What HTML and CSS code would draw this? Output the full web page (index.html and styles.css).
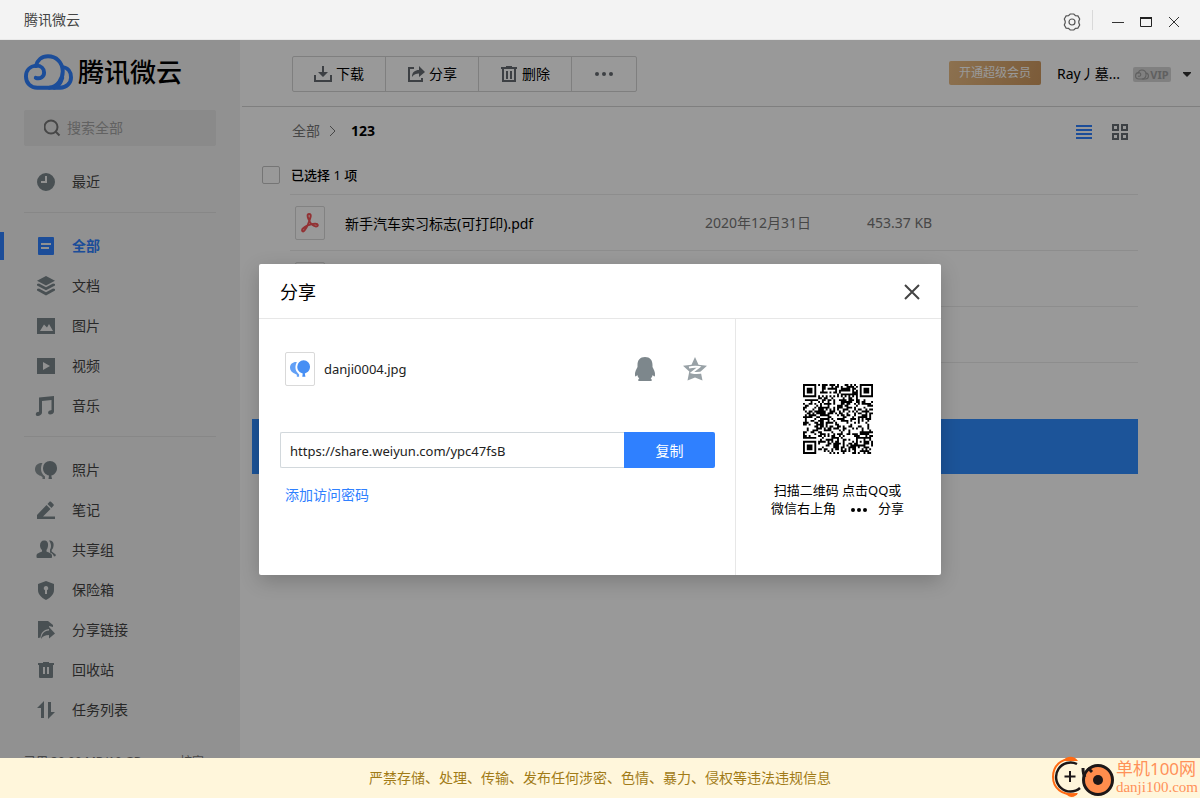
FILE: index.html
```html
<!DOCTYPE html>
<html lang="zh-CN">
<head>
<meta charset="utf-8">
<title>腾讯微云</title>
<link rel="stylesheet" href="styles.css">
</head>
<body>
<svg class="defs" aria-hidden="true">
  <symbol id="cloud" viewBox="0 0 50 36"><g fill="none" stroke="currentColor" stroke-width="4" stroke-linecap="round" stroke-linejoin="round"><path d="M12 24c4.500 1.500 8.500-1 8.500-5.500c0-4-3-7-8-7C6 12 2 16.500 2 22.500C2 29.500 7 34 13.500 34H37c6 0 11-4.500 11-10.500c0-6-3.500-10-8.500-10.500"/><path d="M12 12C13.500 6 18 2 24.500 2C33 2 39 8 39.500 16.500C40 25 34 33 26 34M39 24C37.500 29 34 33 31 34"/></g></symbol>
  <symbol id="balloons" viewBox="0 0 22 18"><path d="M7.500 2C3.500 1.500 0 4 0 8.200c0 3.300 2.500 5.700 5.500 6.500L7.500 16v2H10v-2.500C7 13 6 10.500 6 8c0-2.500.5-4.200 1.500-6z" opacity=".85"/><path d="M15 0a7 7 0 0 1 7 7.200c0 4-2.700 6.500-5.700 7.300L17 18h-3.500l.5-3.500C10.500 13.700 8 11 8 7.200A7 7 0 0 1 15 0z"/></symbol>
</svg>
<div class="app">
  <header class="titlebar">
    <span>腾讯微云</span>
    <div class="window-tools">
      <button aria-label="设置"><svg width="18" height="18" viewBox="0 0 18 18" fill="none" stroke="#555" stroke-width="1.200"><path d="M7.200 1h3.600l1.700 1.700 2.400.2 1.800 3.100-.9 2.200v1.600l.9 2.200-1.800 3.100-2.400.2-1.700 1.700H7.200l-1.700-1.700-2.400-.2L1.300 12l.9-2.200V8.200L1.300 6l1.800-3.100 2.400-.2z"/><circle cx="9" cy="9" r="3"/></svg></button>
      <i class="tool-rule"></i>
      <button aria-label="最小化"><svg width="12" height="12"><path d="M0 6.500h12" stroke="#333"/></svg></button>
      <button aria-label="最大化"><svg width="12" height="12"><path d="M.5 1v9.500h11V1M0 1.500h12" fill="none" stroke="#222"/><path d="M0 2h12" stroke="#222" stroke-width="2"/></svg></button>
      <button aria-label="关闭窗口"><svg width="12" height="12"><path d="M1 1l10 10M11 1L1 11" stroke="#333"/></svg></button>
    </div>
  </header>

  <div class="workspace">
    <aside class="sidebar">
      <div class="brand"><svg width="49" height="36"><use href="#cloud"/></svg><span>腾讯微云</span></div>
      <label class="search"><svg width="18" height="18" viewBox="0 0 18 18" fill="none" stroke="#777" stroke-width="2"><circle cx="7" cy="8" r="6.500"/><path d="M11.500 12.500l4 4"/></svg><input type="text" placeholder="搜索全部" aria-label="搜索全部"></label>
      <nav>
        <div class="nav-group">
          <a href="#"><svg viewBox="0 0 22 22"><path fill-rule="evenodd" d="M11 2a9 9 0 1 1 0 18 9 9 0 0 1 0-18zM10 5v5H6v2h6V5z"/></svg>最近</a>
        </div>
        <div class="nav-group">
          <a href="#" class="active"><svg viewBox="0 0 22 22"><path fill-rule="evenodd" d="M4 2h14a1 1 0 0 1 1 1v16a1 1 0 0 1-1 1H4a1 1 0 0 1-1-1V3a1 1 0 0 1 1-1zm2 6v2h10V8zm0 4v2h8v-2z"/></svg>全部</a>
          <a href="#"><svg viewBox="0 0 22 22"><path d="M11 1l9 4.700-9 4.800-9-4.800zM2 9l2-.5 7 3.700 7-3.700 2 .5v1.500l-9 4.800-9-4.800zM2 14l2-.5 7 3.700 7-3.700 2 .5v1.500L11 20.500 2 15.500z"/></svg>文档</a>
          <a href="#"><svg viewBox="0 0 22 22"><path fill-rule="evenodd" d="M2 3h18v16H2zm3 13h13l-4-7-2 3.500L9 9.500z"/></svg>图片</a>
          <a href="#"><svg viewBox="0 0 22 22"><path fill-rule="evenodd" d="M2 3h18v16H2zm6 4v8l7-4z"/></svg>视频</a>
          <a href="#"><svg viewBox="0 0 22 22"><path d="M4 2.500L19 1v15.500c0 2-2 3-4 3-2.500 0-2.500-3.500 0-4l1.500-.5V5L7 6v11.500c0 2-2.500 3.500-4.500 3.500-2.500 0-2-3.500 0-4l1.500-.3z"/></svg>音乐</a>
        </div>
        <div class="nav-group">
          <a href="#"><svg viewBox="0 0 22 22"><use href="#balloons" y="2" width="22" height="18"/></svg>照片</a>
          <a href="#"><svg viewBox="0 0 22 22"><path d="M2 19v-3L11.500 6l4 4L8 17.500h12v2.500H2zM12.500 5l2-2.200c.5-.5 1-.4 1.500 0l2.500 2.400c.4.500.4 1 0 1.500L16.500 9z"/></svg>笔记</a>
          <a href="#"><svg viewBox="0 0 22 22"><path d="M9 1.500c3 0 4.500 2 4 5.500-.2 2-1 3-1.500 4v1.500c2.500 1 5.500 2 5.500 4V18c0 .6-.4 1-1 1H3c-1 0-1.500-.4-1.500-1v-1.500c0-2 3-3 5.500-4V11C6 10 5 8.500 5 6.500c0-3 1.500-5 4-5zM14 1.500c3.500 0 5 2 4.500 5.500-.2 2-1 3-1.800 4v1.500l4 3v1.500l-1.700.5c-.5-1.500-1.500-3-4-4V10.500c1.500-2 1.500-6-1-9z"/></svg>共享组</a>
          <a href="#"><svg viewBox="0 0 22 22"><path fill-rule="evenodd" d="M11 2l8 3v6c0 4-3 7.500-8 10-5-2.500-8-6-8-10V5zm0 5a2.200 2.200 0 0 0-1 4.200V15h2v-3.800A2.200 2.200 0 0 0 11 7z"/></svg>保险箱</a>
          <a href="#"><svg viewBox="0 0 22 22"><path d="M3 2h10l5 4v2l-4-1v3C8 11 6 14 5.500 18.500L3 19z"/><path d="M6 20c.5-5 3-8 8-8.500V8l6 6.500-6 5V16c-4 0-6 1-8 4z"/></svg>分享链接</a>
          <a href="#"><svg viewBox="0 0 22 22"><path fill-rule="evenodd" d="M3 4h5V3h6v1h5v2h-1v12a1 1 0 0 1-1 1H5a1 1 0 0 1-1-1V6H3zm5 4v7h2V8zm4 0v7h2V8z"/></svg>回收站</a>
          <a href="#"><svg viewBox="0 0 22 22"><path d="M9 2v17H6V9H2zM13 3h3v10h4l-7 7z"/></svg>任务列表</a>
        </div>
      </nav>
      <div class="quota"><span>已用 30.00 MB/10 GB</span><a href="#">扩容<svg width="8" height="8"><path d="M1 4l3-3 3 3M4 1v7" fill="none" stroke="#777"/></svg></a></div>
    </aside>

    <main class="main">
      <header class="topbar">
        <div class="actions">
          <button><svg width="18" height="18" viewBox="0 0 18 18"><path d="M1 10v6h16v-6" fill="none" stroke="#666c72" stroke-width="2"/><path d="M8 1h2v6h4l-5 5-5-5h4z"/></svg>下载</button>
          <button><svg width="18" height="18" viewBox="0 0 18 18"><path d="M7 3H2v13h13v-3" fill="none" stroke="#666c72" stroke-width="2"/><path d="M5 12c0-5 3-7 7-7V1l6 6-6 5V8.500C9 8.500 7 9 5 12z"/></svg>分享</button>
          <button><svg width="18" height="18" viewBox="0 0 18 18"><path d="M3 4v12h12V4" fill="none" stroke="#666c72" stroke-width="2"/><path d="M1 2h5V1h6v1h5v2H1zM6 6h2v8H6zM10 6h2v8h-2z"/></svg>删除</button>
          <button class="more" aria-label="更多"><svg width="18" height="6"><circle cx="2" cy="3" r="2"/><circle cx="9" cy="3" r="2"/><circle cx="16" cy="3" r="2"/></svg></button>
        </div>
        <div class="account">
          <button class="upgrade">开通超级会员</button>
          <span class="user">Ray丿墓...</span>
          <span class="vip"><svg width="14" height="11"><use href="#cloud"/></svg>VIP</span>
          <svg class="caret" width="10" height="6"><path d="M1 0h8v1L5 5 1 1z"/></svg>
        </div>
      </header>

      <section class="files">
        <div class="path">
          <div><a href="#">全部</a><svg width="8" height="12"><path d="M1 1l5 5-5 5" fill="none" stroke="#777"/></svg><b>123</b></div>
          <div class="views">
            <button aria-label="列表"><svg width="16" height="14" fill="#2f80ff"><path d="M0 0h16v2H0zM0 4h16v2H0zM0 8h16v2H0zM0 12h16v2H0z"/></svg></button>
            <button aria-label="网格"><svg width="16" height="16" fill="none" stroke="#676d73" stroke-width="2"><path d="M1 1h5v5H1zM10 1h5v5h-5zM1 10h5v5H1zM10 10h5v5h-5z"/></svg></button>
          </div>
        </div>
        <label class="selection"><input type="checkbox"><span>已选择 <em>1</em> 项</span></label>
        <table>
          <tr><td class="mark"></td><td class="thumb"><span><svg width="18" height="20" viewBox="0 0 18 20" fill="none" stroke="#f45458" stroke-width="2"><path d="M8 1c-2 0-1.500 3-.5 5 1.500 4 4 7 7.500 7.500 2.500 0 2.500-3-1-2.800-5 .3-10 2.300-12.500 5.300-1 2 .5 3.500 2 1.500C6.500 13.500 8.500 8 9.500 4 10 2 9.500 1 8 1z"/></svg></span></td><td class="name">新手汽车实习标志(可打印).pdf</td><td class="date">2020年12月31日</td><td class="size">453.37 KB</td></tr>
          <tr><td class="mark"></td><td class="thumb"><span></span></td><td colspan="3"></td></tr>
          <tr><td class="mark"></td><td class="thumb"><span></span></td><td colspan="3"></td></tr>
          <tr class="last"><td class="mark"></td><td class="thumb"><span></span></td><td colspan="3"></td></tr>
          <tr class="selected"><td class="mark"></td><td class="thumb"><span></span></td><td colspan="3"></td></tr>
        </table>
      </section>
    </main>
  </div>

  <div class="mask">
    <section class="dialog" role="dialog" aria-labelledby="share-title">
      <header><h2 id="share-title">分享</h2><button aria-label="关闭"><svg width="16" height="16"><path d="M1 1l14 14M15 1L1 15" stroke="#444" stroke-width="2"/></svg></button></header>
      <div class="dialog-body">
        <div class="share">
          <div class="share-file">
            <span class="file-icon"><svg width="20" height="17" fill="#478ff4"><use href="#balloons"/></svg></span>
            <span class="file-name">danji0004.jpg</span>
            <button aria-label="QQ"><svg width="22" height="26" viewBox="0 0 22 26" fill="#7d878c"><path d="M11 1c5 0 7.500 3 7.500 8v2c1 2 3 5 2.500 8.500-.3 1.500-1.200 1-2.300-.5-.3 1.500-1 2.700-2 3.500 1.200.7 1.300 1.500.8 2.500h-13c-.5-1-.4-1.800.8-2.500-1-.8-1.700-2-2-3.500C2.200 20.500 1.300 21 1 19.500.5 16 2.500 13 3.500 11V9c0-5 2.500-8 7.500-8z"/></svg></button>
            <button aria-label="QQ空间"><svg width="24" height="24" viewBox="0 0 24 24"><path fill="#98a1a6" d="M12 0l3.500 7.700 8.500 1-6.300 5.800 1.800 9L12 20.500l-7.500 3 1.800-9L0 8.700l8.500-1z"/><path fill="none" stroke="#fff" stroke-width="2" d="M6 10.500c4-1 7-1 10-.5l-7 5.500c3 .8 7 .8 12-.5"/></svg></button>
          </div>
          <div class="link-row"><input type="text" aria-label="分享链接" value="https://share.weiyun.com/ypc47fsB"><button>复制</button></div>
          <a href="#" class="password">添加访问密码</a>
        </div>
        <div class="scan">
          <svg id="qr" width="70" height="70" viewBox="0 0 37 37" role="img" aria-label="二维码"><path/></svg>
          <p>扫描二维码 点击QQ或<br>微信右上角<svg class="dots" width="18" height="6"><circle cx="3" cy="3" r="2"/><circle cx="9" cy="3" r="2"/><circle cx="15" cy="3" r="2"/></svg>分享</p>
        </div>
      </div>
    </section>
  </div>

  <footer class="notice">严禁存储、处理、传输、发布任何涉密、色情、暴力、侵权等违法违规信息</footer>
  <div class="watermark">
    <svg width="64" height="42" viewBox="0 0 64 42" fill="none"><path d="M22 3C10 2 2 10 2 21s9 19 24 17" stroke="#ff6a13" stroke-width="2"/><path d="M12 5c4-6 12-5 15 0zM15 38c4 5 10 3 12-1z" fill="#ff6a13"/><path d="M26 8A14.500 14.500 0 1 0 29 32" stroke="#1d1718" stroke-width="2.500"/><path d="M19 15v11M13.500 20.500h11" stroke="#1d1718" stroke-width="2"/><circle cx="47" cy="24" r="14.500" fill="#ff8d4d" stroke="#1d1718" stroke-width="3"/><path d="M32 12c0 6 2 9 2 9M37 12l4 4" stroke="#1d1718" stroke-width="3"/><circle cx="47" cy="24" r="5" fill="#1d1718"/></svg>
    <p><b>单机100网</b><span>danji100.com</span></p>
  </div>
</div>
<script src="qr.js"></script>
</body>
</html>
```
FILE: styles.css
```css
* { box-sizing: border-box; }
body { margin: 0; font: 14px/20px "Noto Sans", "Noto Sans CJK SC", sans-serif; color: #000; }
button { margin: 0; padding: 0; border: 0; background: none; font: inherit; color: inherit; display: flex; align-items: center; justify-content: center; }
a { color: inherit; text-decoration: none; }
input { font: inherit; }
p, h2 { margin: 0; }
svg { flex: none; }
.defs { position: absolute; width: 0; height: 0; }

.app { position: relative; display: flex; flex-direction: column; height: 100vh; overflow: hidden; background: #fff; }
.titlebar { display: flex; justify-content: space-between; align-items: center; height: 40px; flex: none; padding: 0 20px 0 24px; background: #f3f3f3; border-bottom: 1px solid #e8e8e8; color: #444; }
.window-tools { display: flex; align-items: center; gap: 16px; padding-top: 4px; }
.tool-rule { width: 1px; height: 20px; margin: -4px 3px 0 -5px; background: #d9d9d9; }

.workspace { flex: 1; min-height: 0; display: flex; overflow: hidden; }
.sidebar { width: 240px; flex: none; background: #f2f2f2; padding-top: 14px; }
.brand { display: flex; align-items: center; gap: 5px; height: 36px; margin: 0 20px 20px 24px; color: #2f80ff; }
.brand span { font-size: 26px; line-height: 36px; font-weight: 500; color: #000; white-space: nowrap; }
.search { display: flex; align-items: center; gap: 5px; height: 36px; margin: 0 24px 16px; padding: 0 20px; background: #e6e6e6; border-radius: 2px; }
.search input { width: 100%; min-width: 0; border: 0; padding: 0; background: none; }
.search input::placeholder { color: #a3a3a3; opacity: 1; }
.nav-group + .nav-group { padding-top: 13px; margin-top: 10px; }
.nav-group + .nav-group::before { content: ""; display: block; height: 1px; margin: -13px 24px 13px; background: #e2e2e2; }
.nav-group a { display: flex; align-items: center; gap: 15px; height: 40px; padding-left: 35px; color: #444; }
.nav-group svg { width: 22px; height: 22px; fill: #7a868b; }
.nav-group .active { color: #2f80ff; font-weight: bold; background: linear-gradient(#2f80ff, #2f80ff) 0 center / 4px 28px no-repeat; }
.nav-group .active svg { fill: #2f80ff; }
.quota { display: flex; justify-content: space-between; padding: 22px 24px 0; font-size: 12px; line-height: 20px; color: #777; }
.quota svg { margin: 0 2px; }

.main { flex: 1; min-width: 0; }
.topbar { display: flex; justify-content: space-between; align-items: center; height: 67px; margin-left: 2px; padding: 2px 8px 0 50px; border-bottom: 1px solid #d4d4d4; }
.actions { display: flex; border: 1px solid #d4d4d4; border-radius: 2px; }
.actions button { width: 93px; height: 34px; gap: 4px; fill: #666c72; }
.actions button:first-child { width: 92px; }
.actions button + button { border-left: 1px solid #d4d4d4; }
.actions .more { width: 65px; }
.account { display: flex; align-items: center; white-space: nowrap; }
.upgrade { width: 92px; height: 24px; border-radius: 2px; background: linear-gradient(110deg, #eabd85, #ce985f); color: #fff; font-size: 12px; margin: -2px 16px 0 0; }
.user { width: 76px; }
.vip { display: flex; align-items: center; justify-content: center; gap: 1px; width: 38px; height: 15px; border-radius: 2px; background: #d6d6d6; color: #a0a0a0; font-size: 11px; font-weight: bold; line-height: 15px; margin-right: 11px; }
.caret { fill: #333; margin-top: 2px; }

.files { padding: 14px 62px 0 12px; }
.path { display: flex; justify-content: space-between; align-items: center; height: 20px; margin: 0 10px 24px 40px; }
.path > div { display: flex; align-items: center; gap: 9px; }
.path a { color: #777; }
.path b { margin-left: 5px; }
.path .views { gap: 20px; padding-top: 2px; }
.selection { display: flex; align-items: center; gap: 11px; height: 20px; margin-left: 10px; font-size: 13px; font-weight: 500; }
.selection input { appearance: none; width: 18px; height: 18px; margin: 0; border: 1px solid #c4c4c4; border-radius: 2px; }
.selection em { font-style: normal; font-weight: normal; }
table { width: 100%; margin-top: 9px; border-collapse: separate; border-spacing: 0; table-layout: fixed; }
td { height: 56px; padding: 0; border-top: 1px solid #ebebeb; }
td.mark { width: 38px; border: 0; }
.thumb { width: 55px; }
.thumb span { display: flex; align-items: center; justify-content: center; width: 30px; height: 34px; margin-left: 5px; border: 1px solid #d9d9d9; border-radius: 2px; background: #fff; }
td.name { width: 360px; padding-top: 3px; }
.date { width: 162px; color: #777; }
.size { color: #777; }
tr.last td { height: 57px; }
.selected td { height: 55px; border: 0; background: #308cff; }

.mask { position: absolute; inset: 40px 0 0; display: grid; place-items: center; background: rgba(0, 0, 0, .4); }
.dialog { width: 682px; background: #fff; border-radius: 2px; box-shadow: 0 6px 20px rgba(0, 0, 0, .2); }
.dialog > header { display: flex; align-items: center; justify-content: space-between; height: 55px; padding: 2px 21px 0; border-bottom: 1px solid #e7e7e7; }
.dialog h2 { font-size: 18px; line-height: 24px; font-weight: normal; }
.dialog-body { display: flex; height: 256px; }
.share { flex: 1; padding: 33px 20px 0 21px; }
.share-file { display: flex; align-items: center; gap: 27px; height: 34px; padding: 0 8px 0 5px; }
.file-icon { display: flex; align-items: center; justify-content: center; width: 30px; height: 34px; border: 1px solid #d9d9d9; border-radius: 2px; }
.file-name { flex: 1; margin-left: -18px; font-size: 13px; color: #222; }
.link-row { display: flex; height: 36px; margin-top: 46px; }
.link-row input { flex: 1; min-width: 0; padding: 3px 9px 0; border: 1px solid #d2d8dc; border-right: 0; border-radius: 2px 0 0 2px; font-size: 13px; color: #222; }
.link-row button { width: 91px; padding-top: 2px; background: #2f80ff; color: #fff; border-radius: 0 2px 2px 0; }
.password { display: inline-block; margin: 17px 5px; color: #2f80ff; }
.scan { width: 206px; border-left: 1px solid #e7e7e7; padding: 65px 2px 0 0; text-align: center; }
.scan > svg { display: block; margin: 0 auto; }
.scan p { margin-top: 27px; font-size: 13px; line-height: 18px; }
.dots { margin: 0 10px 0 14px; }

.notice { position: relative; flex: none; height: 40px; line-height: 40px; text-align: center; background: #fff6db; color: #a17b17; }
.watermark { position: absolute; right: 2px; bottom: 0; display: flex; align-items: center; gap: 1px; color: #ff9159; }
.watermark p { display: flex; flex-direction: column; }
.watermark b { font-size: 17px; line-height: 19px; font-weight: normal; white-space: nowrap; }
.watermark span { font-family: "Liberation Serif", serif; font-size: 15px; line-height: 18px; }
```
FILE: qr.js
```js
// Draws a 37 x 37 module code: finder, timing and alignment marks over a data field.
(function () {
  var n = 37, seed = 47, d = "";
  function ring(x, y, cx, cy) { return Math.max(Math.abs(x - cx), Math.abs(y - cy)); }
  function dark(x, y) {
    var centres = [[3, 3], [33, 3], [3, 33]];
    seed = (seed * 1103515245 + 12345) % 2147483648;
    for (var i = 0; i < 3; i++) {
      var r = ring(x, y, centres[i][0], centres[i][1]);
      if (r <= 4) return r !== 2 && r !== 4;
    }
    var a = ring(x, y, 30, 30);
    if (a <= 2) return a !== 1;
    if (x === 6 || y === 6) return (x + y) % 2 === 0;
    return seed / 2147483648 < 0.5;
  }
  for (var y = 0; y < n; y++)
    for (var x = 0; x < n; x++)
      if (dark(x, y)) d += "M" + x + " " + y + "h1v1h-1z";
  document.querySelector("#qr path").setAttribute("d", d);
})();
```
